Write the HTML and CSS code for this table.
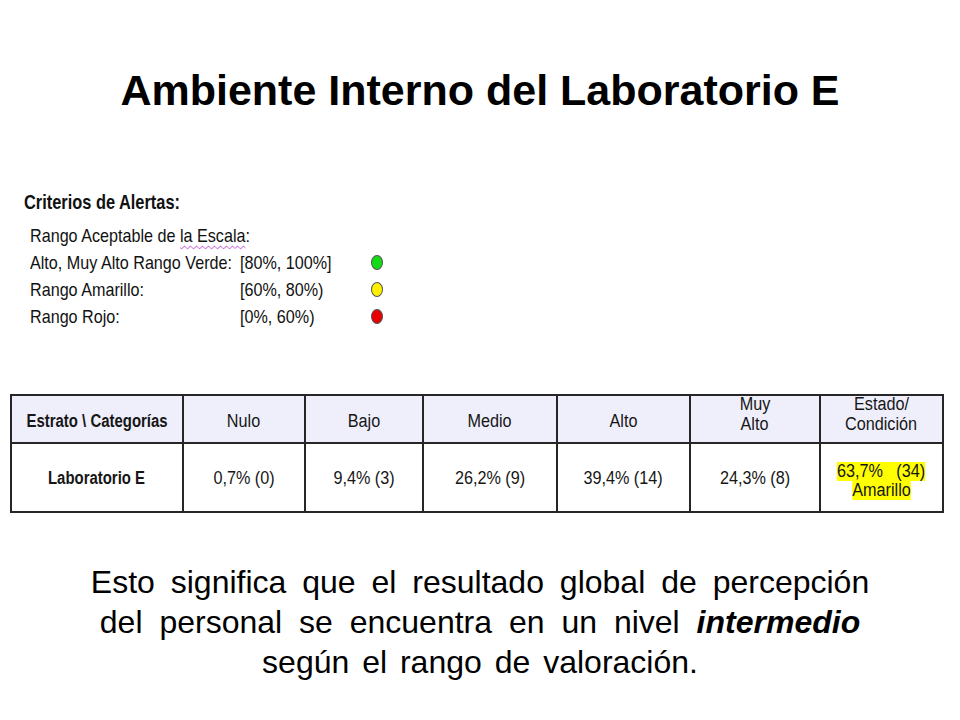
FILE: index.html
```html
<!DOCTYPE html>
<html lang="es">
<head>
<meta charset="utf-8">
<title>Ambiente Interno del Laboratorio E</title>
<link rel="stylesheet" href="styles.css">
</head>
<body>
<div class="slide">
  <h1 class="title">Ambiente Interno del Laboratorio E</h1>

  <section class="criteria">
    <div class="crit-head"><span class="sq-b">Criterios de Alertas:</span></div>
    <div class="crit-row first-row"><span class="crit-label"><span class="sq">Rango Aceptable de <span class="spell">la Escala</span>:</span></span></div>
    <div class="crit-row"><span class="crit-label"><span class="sq">Alto, Muy Alto Rango Verde:</span></span><span class="crit-range"><span class="sq">[80%, 100%]</span></span><span class="dot green"></span></div>
    <div class="crit-row"><span class="crit-label"><span class="sq">Rango Amarillo:</span></span><span class="crit-range"><span class="sq">[60%, 80%)</span></span><span class="dot yellow"></span></div>
    <div class="crit-row"><span class="crit-label"><span class="sq">Rango Rojo:</span></span><span class="crit-range"><span class="sq">[0%, 60%)</span></span><span class="dot red"></span></div>
  </section>

  <table class="results">
    <colgroup>
      <col class="c1"><col class="c2"><col class="c3"><col class="c4"><col class="c5"><col class="c6"><col class="c7">
    </colgroup>
    <thead>
      <tr>
        <th><div class="cell low"><span class="nb">Estrato \ Categorías</span></div></th>
        <th><div class="cell low"><span class="n">Nulo</span></div></th>
        <th><div class="cell low"><span class="n">Bajo</span></div></th>
        <th><div class="cell low"><span class="n">Medio</span></div></th>
        <th><div class="cell low"><span class="n">Alto</span></div></th>
        <th><div class="cell up"><span class="n">Muy</span><span class="n">Alto</span></div></th>
        <th><div class="cell up"><span class="n">Estado/</span><span class="n">Condición</span></div></th>
      </tr>
    </thead>
    <tbody>
      <tr>
        <td><div class="cell"><span class="nb">Laboratorio E</span></div></td>
        <td><div class="cell"><span class="n">0,7% (0)</span></div></td>
        <td><div class="cell"><span class="n">9,4% (3)</span></div></td>
        <td><div class="cell"><span class="n">26,2% (9)</span></div></td>
        <td><div class="cell"><span class="n">39,4% (14)</span></div></td>
        <td><div class="cell"><span class="n">24,3% (8)</span></div></td>
        <td><div class="cell state"><span class="n hl">63,7% &nbsp;&nbsp;(34)</span><span class="n hl">Amarillo</span></div></td>
      </tr>
    </tbody>
  </table>

  <p class="summary"><span class="l1">Esto significa que el resultado global de percepción</span><br><span class="l2">del personal se encuentra en un nivel <b><i>intermedio</i></b></span><br><span class="l3">según el rango de valoración.</span></p>
</div>
</body>
</html>
```
FILE: styles.css
```css
html, body {
  margin: 0;
  padding: 0;
  background: #ffffff;
}
.slide {
  width: 960px;
  height: 720px;
  overflow: hidden;
  font-family: "Liberation Sans", Arial, sans-serif;
  color: #000;
}
.title {
  margin: 0;
  padding-top: 65px;
  text-align: center;
  font-size: 43px;
  font-weight: bold;
  line-height: 50px;
  letter-spacing: 0;
}

/* criteria block */
.criteria {
  margin-top: 74px;
  padding-left: 24px;
  color: #111;
}
.sq, .sq-b {
  display: inline-block;
  white-space: nowrap;
  transform-origin: left center;
}
.sq { transform: scaleX(0.85); }
.sq-b { transform: scaleX(0.78); }
.crit-head {
  font-weight: bold;
  font-size: 21px;
  line-height: 26px;
}
.crit-row {
  display: flex;
  align-items: center;
  height: 27px;
  padding-left: 6px;
  font-size: 19px;
  white-space: nowrap;
}
.crit-row.first-row {
  margin-top: 7px;
}
.crit-label {
  width: 210px;
}
.spell {
  text-decoration: underline wavy #c03ad0;
  text-decoration-thickness: 1px;
  text-underline-offset: 3px;
}
.crit-range {
  width: 131px;
}
.dot {
  width: 12px;
  height: 15px;
  border-radius: 50%;
  border: 1px solid #555;
  box-sizing: border-box;
}
.dot.green { background: #14dc14; }
.dot.yellow { background: #fff000; }
.dot.red { background: #e80000; }

/* table */
.results {
  margin: 64px 0 0 10px;
  border-collapse: collapse;
  table-layout: fixed;
  width: 932px;
  font-size: 18px;
  color: #161616;
}
.c1 { width: 172px; }
.c2 { width: 122px; }
.c3 { width: 118px; }
.c4 { width: 134px; }
.c5 { width: 133px; }
.c6 { width: 130px; }
.c7 { width: 123px; }
.results th, .results td {
  border: 2px solid #262626;
  padding: 0;
  font-weight: normal;
}
.results th {
  background: #efeffb;
  height: 46px;
}
.results td {
  height: 67px;
}
.cell {
  display: flex;
  flex-direction: column;
  align-items: center;
  justify-content: center;
  line-height: 20px;
}
.cell.low {
  padding-top: 4px;
}
.cell.up {
  position: relative;
  top: -5px;
}
.cell.state {
  line-height: 19px;
  padding-top: 6px;
}
.n, .nb {
  display: inline-block;
  white-space: nowrap;
  transform-origin: center center;
}
.n { transform: scaleX(0.9); }
.nb { transform: scaleX(0.83); font-weight: bold; }
.hl {
  background: #ffff00;
}

/* summary */
.summary {
  margin: 49px 0 0;
  text-align: center;
  font-size: 32px;
  line-height: 40px;
}
.summary .l1 { word-spacing: 7px; }
.summary .l2 { word-spacing: 8px; }
.summary .l3 { word-spacing: 4px; }
```
